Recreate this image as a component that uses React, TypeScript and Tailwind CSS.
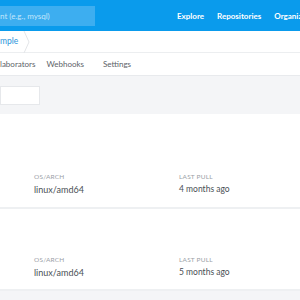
import React from "react";

const tags = [
  { os: "linux/amd64", pulled: "4 months ago" },
  { os: "linux/amd64", pulled: "5 months ago" },
];

const App = () => {
  return (
    <div className="w-[300px] h-[300px] overflow-hidden bg-[#f4f5f7] font-['Lato','Open_Sans',sans-serif]">
      {/* Header */}
      <div className="h-[31px] bg-[#0a9bec] flex items-center">
        <div className="w-[95px] h-[20px] shrink-0 bg-[#3daef0] flex items-center text-[8px] text-[#c4e6fb] whitespace-nowrap">
          nt (e.g., mysql)
        </div>
        <div className="flex shrink-0 gap-[13px] ml-[82px] text-[8px] font-bold text-white whitespace-nowrap">
          <span>Explore</span>
          <span>Repositories</span>
          <span>Organizations</span>
        </div>
      </div>

      {/* Breadcrumb */}
      <div className="h-[22px] bg-white flex items-center border-b border-[#eceef0]">
        <span className="text-[8.5px] text-[#2a95db]">mple</span>
        <svg width="8" height="22" viewBox="0 0 8 22" className="ml-[5px]">
          <path d="M1 0 L6 11 L1 22" stroke="#e3e5e8" strokeWidth="1" fill="none" />
        </svg>
      </div>

      {/* Tabs */}
      <div className="h-[23px] bg-white flex items-center border-b border-[#e8eaed] text-[8px] text-[#5c6268] whitespace-nowrap">
        <span>laborators</span>
        <span className="ml-[11px]">Webhooks</span>
        <span className="ml-[19px]">Settings</span>
      </div>

      {/* Filter bar */}
      <div className="h-[38px] flex items-center">
        <div className="w-[40px] h-[19px] bg-white border border-[#e6e8eb]" />
      </div>

      {/* Tag list */}
      <div className="bg-white">
        {tags.map((t, i) => (
          <div
            key={i}
            className={`${i === 0 ? "h-[95px] pt-[58px]" : "h-[82px] pt-[46px]"} border-b-2 border-[#eef0f2] flex`}
          >
            <div className="ml-[34px] w-[145px]">
              <p className="text-[6.5px] tracking-[0.2px] text-[#9aa0a6] leading-[9px]">OS/ARCH</p>
              <p className="text-[9px] text-[#4a4f55] mt-[3px] leading-[11px]">{t.os}</p>
            </div>
            <div>
              <p className="text-[6.5px] tracking-[0.2px] text-[#9aa0a6] leading-[9px]">LAST PULL</p>
              <p className="text-[8.5px] text-[#4a4f55] mt-[3px] leading-[11px]">{t.pulled}</p>
            </div>
          </div>
        ))}
      </div>
    </div>
  );
};

export default App;
